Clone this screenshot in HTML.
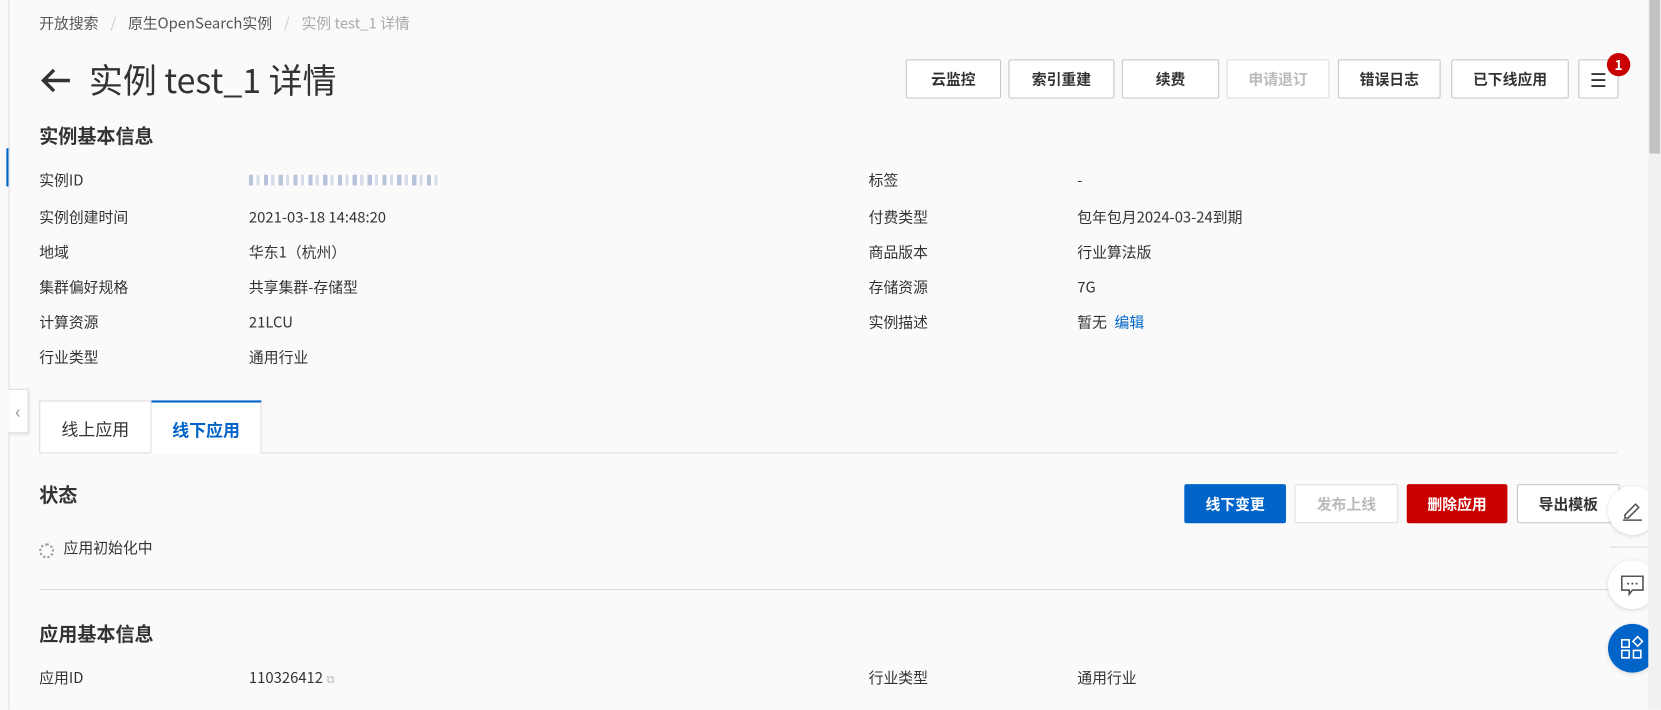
<!DOCTYPE html>
<html><head><meta charset="utf-8"><style>
html,body{margin:0;padding:0;width:1661px;height:709px;overflow:hidden;background:#fafafa;}
#w{position:absolute;left:0;top:0;width:1568px;height:670px;transform:scale(1.0593);transform-origin:0 0;font-family:"Noto Sans CJK SC","Liberation Sans",sans-serif;color:#333;font-size:14px;line-height:18px;}
.a{position:absolute;white-space:nowrap;}
.btn{position:absolute;top:56px;height:35px;border:1px solid #c0c6cc;background:#fff;border-radius:2px;font-size:14px;font-weight:bold;color:#333;display:flex;align-items:center;justify-content:center;box-sizing:content-box;}
.h{font-size:18px;font-weight:bold;color:#333;line-height:22px;}
.circ{position:absolute;width:46px;height:46px;border-radius:50%;background:#fff;box-shadow:0 1px 4px rgba(0,0,0,.15);display:flex;align-items:center;justify-content:center;}
</style></head><body><div id="w">
<div class="a" style="left:8px;top:0;width:1px;height:670px;background:#ddd"></div>
<div class="a" style="left:6px;top:140px;width:2px;height:36px;background:#0064c8"></div>
<div class="a" style="left:8px;top:367px;width:18px;height:40px;background:#fff;border:1px solid #ddd;border-left:none;box-shadow:1px 1px 3px rgba(0,0,0,.1);color:#999;font-size:18px;line-height:40px;text-align:center">‹</div>
<div class="a" style="left:37px;top:13px;font-size:14px;color:#555">开放搜索 <span style="color:#ccc;margin:0 8px">/</span> 原生OpenSearch实例 <span style="color:#ccc;margin:0 8px">/</span> <span style="color:#aaa">实例 test_1 详情</span></div>
<svg class="a" style="left:37px;top:63px" width="30" height="26" viewBox="0 0 30 26"><path d="M29 13H5M14 3L4 13l10 10" stroke="#333" stroke-width="3.2" fill="none"/></svg>
<div class="a" style="left:84px;top:55px;font-size:32px;line-height:40px;color:#333">实例 test_1 详情</div>
<div class="btn" style="left:855px;width:88px">云监控</div>
<div class="btn" style="left:952px;width:98px">索引重建</div>
<div class="btn" style="left:1059px;width:90px">续费</div>
<div class="btn" style="left:1158px;width:95px;color:#bbb;border-color:#ddd">申请退订</div>
<div class="btn" style="left:1263px;width:95px">错误日志</div>
<div class="btn" style="left:1370px;width:109px">已下线应用</div>
<div class="btn" style="left:1490px;width:36px;font-weight:normal;font-size:18px">☰</div>
<div class="a" style="left:1517px;top:50px;width:22px;height:22px;border-radius:50%;background:#c80000;color:#fff;font-size:13px;font-weight:bold;text-align:center;line-height:22px">1</div>
<div class="a h" style="left:37px;top:117px">实例基本信息</div>
<div class="a" style="left:37px;top:161px">实例ID</div>
<div class="a" style="left:235px;top:165px;width:180px;height:10px;background:repeating-linear-gradient(90deg,#8aa0c8 0 4px,#fff 4px 7px,#c0c8e0 7px 10px,#fff 10px 14px);opacity:.6"></div>
<div class="a" style="left:820px;top:161px">标签</div><div class="a" style="left:1017px;top:161px">-</div>
<div class="a" style="left:37px;top:196px">实例创建时间</div><div class="a" style="left:235px;top:196px">2021-03-18 14:48:20</div>
<div class="a" style="left:820px;top:196px">付费类型</div><div class="a" style="left:1017px;top:196px">包年包月2024-03-24到期</div>
<div class="a" style="left:37px;top:229px">地域</div><div class="a" style="left:235px;top:229px">华东1（杭州）</div>
<div class="a" style="left:820px;top:229px">商品版本</div><div class="a" style="left:1017px;top:229px">行业算法版</div>
<div class="a" style="left:37px;top:262px">集群偏好规格</div><div class="a" style="left:235px;top:262px">共享集群-存储型</div>
<div class="a" style="left:820px;top:262px">存储资源</div><div class="a" style="left:1017px;top:262px">7G</div>
<div class="a" style="left:37px;top:295px">计算资源</div><div class="a" style="left:235px;top:295px">21LCU</div>
<div class="a" style="left:820px;top:295px">实例描述</div><div class="a" style="left:1017px;top:295px">暂无 <span style="color:#0064c8;margin-left:4px">编辑</span></div>
<div class="a" style="left:37px;top:328px">行业类型</div><div class="a" style="left:235px;top:328px">通用行业</div>
<div class="a" style="left:37px;top:378px;width:104px;height:48px;border:1px solid #ddd;border-bottom:none;background:#fff;font-size:16px;text-align:center;line-height:50px">线上应用</div>
<div class="a" style="left:143px;top:378px;width:103px;height:48px;border-top:2px solid #0064c8;border-right:1px solid #ddd;background:#fff;font-size:16px;font-weight:bold;color:#0064c8;text-align:center;line-height:50px">线下应用</div>
<div class="a" style="left:246px;top:427px;width:1281px;height:1px;background:#ddd"></div>
<div class="a" style="left:37px;top:427px;width:105px;height:1px;background:#ddd"></div>
<div class="a h" style="left:37px;top:456px">状态</div>
<div class="btn" style="top:457px;left:1118px;width:94px;background:#0064c8;border-color:#0064c8;color:#fff">线下变更</div>
<div class="btn" style="top:457px;left:1222px;width:96px;color:#bbb;border-color:#ddd">发布上线</div>
<div class="btn" style="top:457px;left:1328px;width:93px;background:#c80000;border-color:#c80000;color:#fff">删除应用</div>
<div class="btn" style="top:457px;left:1432px;width:95px">导出模板</div>
<div class="a" style="left:37px;top:513px;width:10px;height:10px;border:2px dotted #999;border-radius:50%"></div>
<div class="a" style="left:60px;top:508px">应用初始化中</div>
<div class="a" style="left:37px;top:556px;width:1490px;height:1px;background:#ddd"></div>
<div class="a h" style="left:37px;top:587px">应用基本信息</div>
<div class="a" style="left:37px;top:631px">应用ID</div><div class="a" style="left:235px;top:631px">110326412 <span style="color:#bbb;font-size:11px">⧉</span></div>
<div class="a" style="left:820px;top:631px">行业类型</div><div class="a" style="left:1017px;top:631px">通用行业</div>
<div class="circ" style="left:1518px;top:459px"><svg width="22" height="22" viewBox="0 0 22 22"><path d="M4 15L14 5l3 3-10 10H4z" stroke="#555" stroke-width="1.5" fill="none"/><path d="M2 20h18" stroke="#555" stroke-width="1.5"/></svg></div>
<div class="a" style="left:1520px;top:516px;width:48px;height:1px;background:#ddd"></div>
<div class="circ" style="left:1518px;top:529px"><svg width="24" height="22" viewBox="0 0 24 22"><path d="M2 3h20v13H12l-3 4v-4H2z" stroke="#555" stroke-width="1.5" fill="none"/><circle cx="8" cy="10" r="1" fill="#555"/><circle cx="12" cy="10" r="1" fill="#555"/><circle cx="16" cy="10" r="1" fill="#555"/></svg></div>
<div class="circ" style="left:1518px;top:589px;background:#0064c8"><svg width="24" height="24" viewBox="0 0 24 24" fill="none" stroke="#fff" stroke-width="1.5"><rect x="2" y="4" width="7" height="7"/><rect x="2" y="14" width="7" height="7"/><rect x="13" y="14" width="7" height="7"/><path d="M17 1l4.5 4.5L17 10l-4.5-4.5z"/></svg></div>
<div class="a" style="left:1556px;top:0;width:12px;height:670px;background:#f1f1f1"></div>
<div class="a" style="left:1557px;top:0;width:10px;height:145px;background:#c1c1c1"></div>
</div></body></html>
